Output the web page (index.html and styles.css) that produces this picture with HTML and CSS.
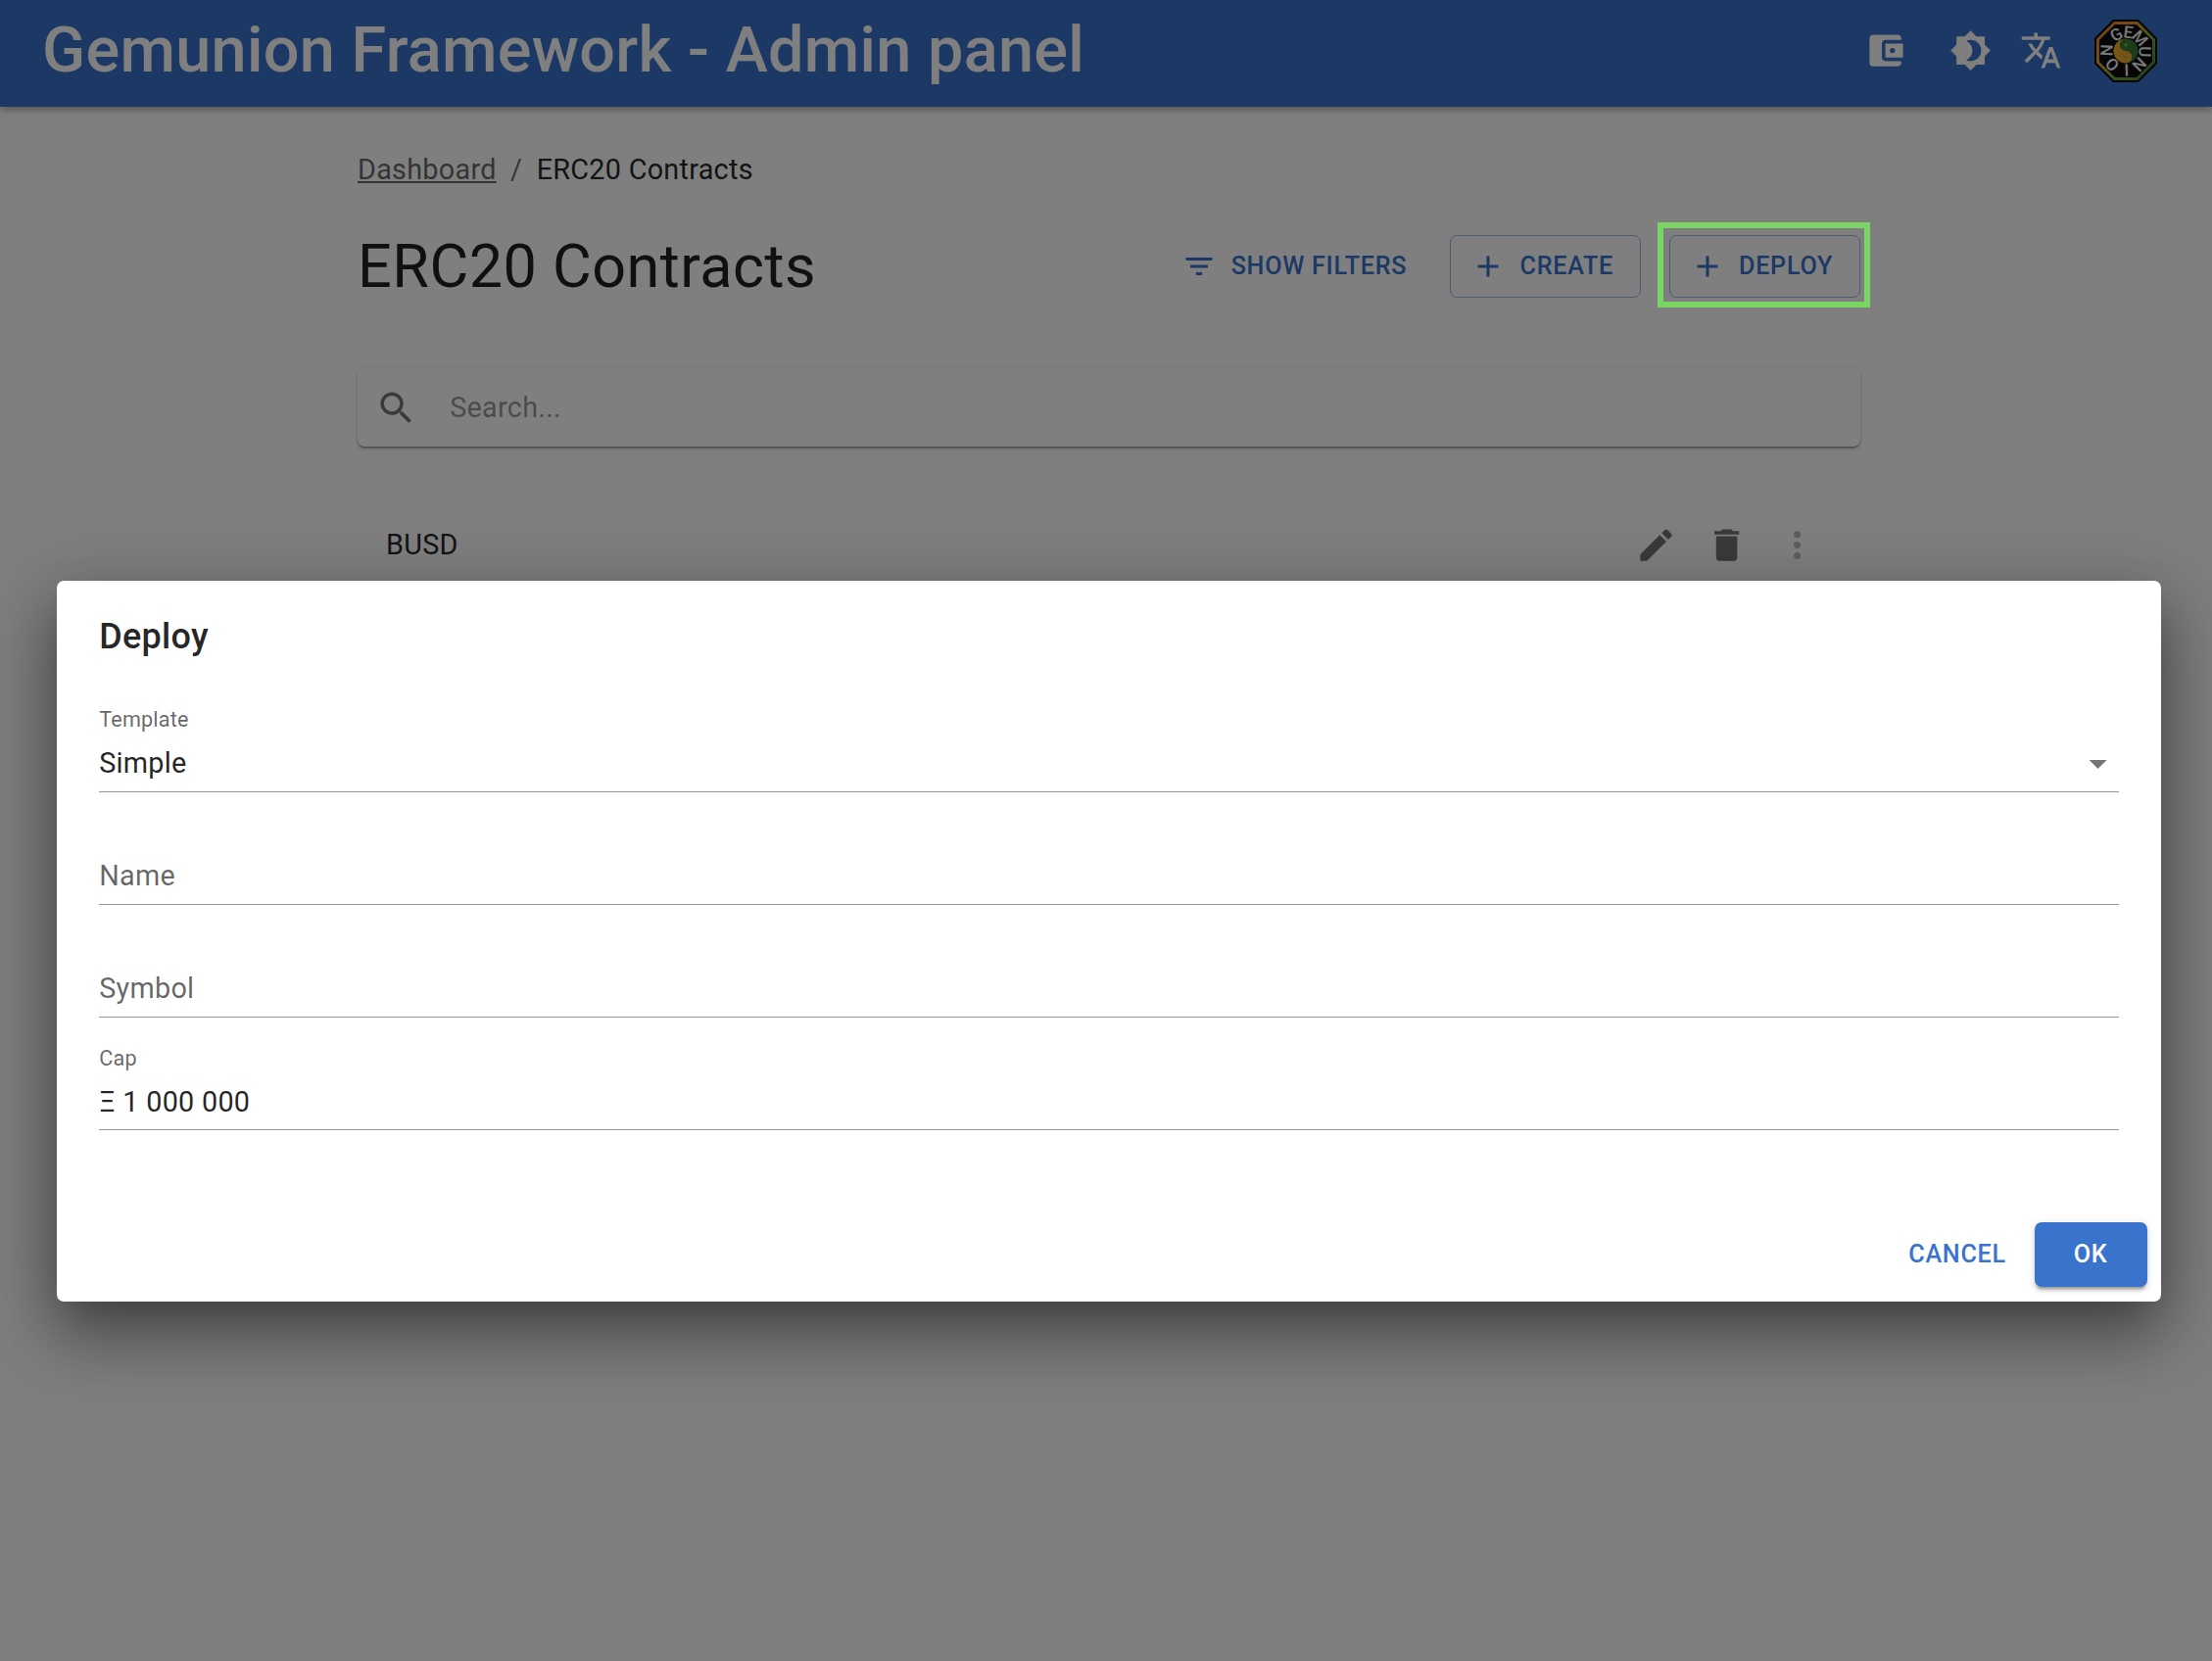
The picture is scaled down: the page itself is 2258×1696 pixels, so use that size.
FILE: index.html
```html
<!DOCTYPE html>
<html lang="en">
<head>
<meta charset="utf-8">
<title>Gemunion Framework - Admin panel</title>
<link rel="stylesheet" href="styles.css">
</head>
<body>
<header class="appbar">
  <div class="brand">Gemunion Framework - Admin panel</div>
  <div class="tools">
    <span class="tool tool-wallet"><svg class="icon" viewBox="0 0 24 24"><path d="M21 18v1c0 1.1-.9 2-2 2H5c-1.11 0-2-.9-2-2V5c0-1.1.89-2 2-2h14c1.1 0 2 .9 2 2v1h-9c-1.11 0-2 .9-2 2v8c0 1.1.89 2 2 2h9zm-9-2h10V8H12v8zm4-2.5c-.83 0-1.5-.67-1.5-1.5s.67-1.5 1.5-1.5 1.5.67 1.5 1.5-.67 1.5-1.5 1.5z"/></svg></span>
    <span class="tool tool-theme"><svg class="icon" viewBox="0 0 24 24"><path d="M20 8.69V4h-4.69L12 .69 8.69 4H4v4.69L.69 12 4 15.31V20h4.69L12 23.31 15.31 20H20v-4.69L23.31 12 20 8.69zM12 18c-.89 0-1.74-.2-2.5-.55C11.56 16.5 13 14.42 13 12s-1.44-4.5-3.5-5.45C10.26 6.2 11.11 6 12 6c3.31 0 6 2.69 6 6s-2.69 6-6 6z"/></svg></span>
    <span class="tool tool-lang"><svg class="icon" viewBox="0 0 24 24"><path d="M12.87 15.07l-2.54-2.51.03-.03c1.74-1.94 2.98-4.17 3.71-6.53H17V4h-7V2H8v2H1v1.99h11.17C11.5 7.92 10.44 9.75 9 11.35 8.07 10.32 7.3 9.19 6.69 8h-2c.73 1.63 1.73 3.17 2.98 4.56l-5.09 5.02L4 19l5-5 3.11 3.11.76-2.04zM18.5 10h-2L12 22h2l1.12-3h4.75L21 22h2l-4.5-12zm-2.62 7l1.62-4.33L19.12 17h-3.24z"/></svg></span>
    <svg class="logo" viewBox="0 0 64 64">
      <defs>
        <linearGradient id="ring" x1="0" y1="0" x2="1" y2="1">
          <stop offset="0" stop-color="#e8762a"/><stop offset=".42" stop-color="#e3a52c"/><stop offset=".58" stop-color="#7cab3a"/><stop offset="1" stop-color="#3a7a38"/>
        </linearGradient>
      </defs>
      <polygon points="19,0 45,0 64,19 64,45 45,64 19,64 0,45 0,19" fill="#0d0d0d"/>
      <polygon points="20,2 44,2 62,20 62,44 44,62 20,62 2,44 2,20" fill="url(#ring)"/>
      <polygon points="21,5 43,5 59,21 59,43 43,59 21,59 5,43 5,21" fill="#0c0c0c"/>
      <g class="logo-text">
        <text x="32" y="18.5" transform="rotate(-30 32 32)">G</text>
        <text x="32" y="18.5" transform="rotate(8 32 32)">E</text>
        <text x="32" y="18.5" transform="rotate(48 32 32)">M</text>
        <text x="32" y="18.5" transform="rotate(92 32 32)">U</text>
        <text x="32" y="18.5" transform="rotate(135 32 32)">N</text>
        <text x="32" y="18.5" transform="rotate(178 32 32)">I</text>
        <text x="32" y="18.5" transform="rotate(225 32 32)">O</text>
        <text x="32" y="18.5" transform="rotate(272 32 32)">N</text>
      </g>
      <circle cx="32" cy="32" r="12.5" fill="#3b7a33"/>
      <path d="M32 19.5a12.5 12.5 0 0 0 0 25a6.25 6.25 0 0 0 0-12.5a6.25 6.25 0 0 1 0-12.5z" fill="#eba82c"/>
      <circle cx="32" cy="25.75" r="1.5" fill="#8fb840"/><circle cx="32" cy="38.25" r="1.5" fill="#8fb840"/>
    </svg>
  </div>
</header>

<main class="page">
  <nav class="crumbs"><a class="crumb-link" href="#">Dashboard</a><span class="crumb-sep">/</span><span>ERC20 Contracts</span></nav>
  <div class="headline">
    <h1 class="page-title">ERC20 Contracts</h1>
    <div class="actions">
      <button class="btn btn-text"><svg class="btn-icon" viewBox="0 0 24 24"><path d="M10 18h4v-2h-4v2zM3 6v2h18V6H3zm3 7h12v-2H6v2z"/></svg>Show filters</button>
      <button class="btn btn-outlined"><svg class="btn-icon" viewBox="0 0 24 24"><path d="M19 13h-6v6h-2v-6H5v-2h6V5h2v6h6v2z"/></svg>Create</button>
      <span class="deploy-wrap">
        <button class="btn btn-outlined"><svg class="btn-icon" viewBox="0 0 24 24"><path d="M19 13h-6v6h-2v-6H5v-2h6V5h2v6h6v2z"/></svg>Deploy</button>
        <span class="highlight"></span>
      </span>
    </div>
  </div>
  <div class="search">
    <svg class="search-icon" viewBox="0 0 24 24"><path d="M15.5 14h-.79l-.28-.27C15.41 12.59 16 11.11 16 9.5 16 5.91 13.09 3 9.5 3S3 5.91 3 9.5 5.91 16 9.5 16c1.61 0 3.09-.59 4.23-1.57l.27.28v.79l5 4.99L20.49 19l-4.99-5zm-6 0C7.01 14 5 11.99 5 9.5S7.01 5 9.5 5 14 7.01 14 9.5 11.99 14 9.5 14z"/></svg>
    <span class="search-text">Search...</span>
  </div>
  <div class="row">
    <span class="row-name">BUSD</span>
    <span class="row-actions">
      <svg class="row-icon" viewBox="0 0 24 24"><path d="M3 17.25V21h3.75L17.81 9.94l-3.75-3.75L3 17.25zM20.71 7.04c.39-.39.39-1.02 0-1.41l-2.34-2.34c-.39-.39-1.02-.39-1.41 0l-1.83 1.83 3.75 3.75 1.83-1.83z"/></svg>
      <svg class="row-icon" viewBox="0 0 24 24"><path d="M6 19c0 1.1.9 2 2 2h8c1.1 0 2-.9 2-2V7H6v12zM19 4h-3.5l-1-1h-5l-1 1H5v2h14V4z"/></svg>
      <svg class="row-icon row-icon-muted" viewBox="0 0 24 24"><path d="M12 8c1.1 0 2-.9 2-2s-.9-2-2-2-2 .9-2 2 .9 2 2 2zm0 2c-1.1 0-2 .9-2 2s.9 2 2 2 2-.9 2-2-.9-2-2-2zm0 6c-1.1 0-2 .9-2 2s.9 2 2 2 2-.9 2-2-.9-2-2-2z"/></svg>
    </span>
  </div>
</main>

<div class="backdrop">
  <section class="dialog">
    <h2 class="dialog-title">Deploy</h2>
    <div class="dialog-body">
      <div class="field">
        <span class="field-label">Template</span>
        <span class="field-value">Simple<svg class="select-arrow" viewBox="0 0 24 24"><path d="M7 10l5 5 5-5z"/></svg></span>
      </div>
      <div class="field">
        <span class="field-label"></span>
        <span class="field-value field-empty">Name</span>
      </div>
      <div class="field">
        <span class="field-label"></span>
        <span class="field-value field-empty">Symbol</span>
      </div>
      <div class="field">
        <span class="field-label">Cap</span>
        <span class="field-value">Ξ 1 000 000</span>
      </div>
    </div>
    <div class="dialog-actions">
      <button class="btn btn-flat">Cancel</button>
      <button class="btn btn-primary">OK</button>
    </div>
  </section>
</div>
</body>
</html>
```
FILE: styles.css
```css
* { box-sizing: border-box; }
html, body { margin: 0; height: 1696px; overflow: hidden; }
body { background: #fff; color: rgba(0,0,0,.87); font-family: Roboto, "Liberation Sans", sans-serif; font-size: 28.8px; line-height: 1.5; letter-spacing: .27px; position: relative; }

.appbar { height: 109px; background: #3973cc; color: #fff; display: flex; align-items: center; justify-content: space-between; padding: 0 56px 6px 43px; box-shadow: 0 3.6px 7px rgba(0,0,0,.3); }
.brand { font-size: 64.8px; font-weight: 500; line-height: 1; letter-spacing: .3px; }
.tools { display: flex; align-items: center; }
.tool { display: flex; justify-content: center; width: 43.2px; }
.tool-theme { margin-left: 43px; }
.tool-lang { margin-left: 29px; }
.icon { width: 43.2px; height: 43.2px; fill: #fff; display: block; }
.logo { width: 64px; height: 64px; margin-left: 33px; display: block; }
.logo-text { font-family: Roboto, sans-serif; font-size: 17px; font-weight: 500; fill: #f2f2f2; text-anchor: middle; letter-spacing: 0; }

.page { margin-left: 365px; width: 1534px; padding-top: 43.2px; }
.crumbs { display: flex; line-height: 43.2px; color: rgba(0,0,0,.87); }
.crumb-link { color: rgba(0,0,0,.6); text-decoration: underline; }
.crumb-sep { margin: 0 14.4px; color: rgba(0,0,0,.6); }
.headline { display: flex; align-items: center; justify-content: space-between; margin-top: 40.5px; height: 72px; }
.page-title { margin: 0; font-size: 61.2px; font-weight: 400; line-height: 70px; letter-spacing: .45px; }
.actions { display: flex; align-items: center; gap: 28.8px; }

.btn { font: 500 25.2px/44.1px Roboto, "Liberation Sans", sans-serif; letter-spacing: .7px; text-transform: uppercase; border-radius: 7.2px; background: none; border: 0; cursor: pointer; display: flex; align-items: center; }
.btn-icon { width: 36px; height: 36px; fill: currentColor; margin: 0 14.4px 0 -7.2px; }
.btn-text { color: #3973cc; padding: 10.8px 15.4px 10.8px 21px; }
.btn-outlined { color: #3973cc; padding: 9px 27px; border: 1.8px solid rgba(57,115,204,.5); }
.deploy-wrap { position: relative; display: block; }
.highlight { position: absolute; left: -12px; right: -10px; top: -13px; bottom: -10px; border: 6px solid #7ad565; z-index: 20; }

.search { height: 80px; margin-top: 68.5px; border-radius: 7.2px; box-shadow: 0 2px 2px -1px rgba(0,0,0,.3), 0 1.8px 1.8px rgba(0,0,0,.14), 0 1.8px 5.4px rgba(0,0,0,.12); display: flex; align-items: center; padding-left: 18px; }
.search-icon { width: 43.2px; height: 43.2px; fill: rgba(0,0,0,.54); flex: none; }
.search-text { margin-left: 33px; color: rgba(0,0,0,.42); }
.row { display: flex; align-items: center; justify-content: space-between; height: 78px; margin-top: 61px; padding: 0 43px 0 29px; }
.row-actions { display: flex; gap: 28.8px; }
.row-icon { width: 43.2px; height: 43.2px; fill: rgba(0,0,0,.54); }
.row-icon-muted { fill: rgba(0,0,0,.26); }

.backdrop { position: absolute; inset: 0; z-index: 10; background: rgba(0,0,0,.5); padding: 593px 52px 0 58px; }
.dialog { height: 736px; background: #fff; border-radius: 7.2px; box-shadow: 0 20px 46px -12px rgba(0,0,0,.35), 0 43px 68px 5px rgba(0,0,0,.2), 0 16px 82px 14px rgba(0,0,0,.15); display: flex; flex-direction: column; }
.dialog-title { margin: 0; padding: 28.8px 43.2px 0; font-size: 36px; font-weight: 500; line-height: 57.6px; }
.dialog-body { margin-top: 43px; padding: 0 43.2px; flex: 1; }
.field { height: 86.4px; margin-bottom: 28.8px; border-bottom: 1.8px solid rgba(0,0,0,.42); display: flex; flex-direction: column; }
.field-label { height: 26px; font-size: 21.6px; line-height: 26px; letter-spacing: .2px; color: rgba(0,0,0,.6); flex: none; }
.field-value { display: flex; align-items: center; justify-content: space-between; height: 56px; line-height: 56px; margin-top: 3px; flex: none; }
.field-empty { color: rgba(0,0,0,.6); margin-top: 2px; }
.select-arrow { width: 43.2px; height: 43.2px; fill: rgba(0,0,0,.54); }
.dialog-actions { display: flex; justify-content: flex-end; align-items: center; gap: 14.4px; padding: 14.4px 14.4px 15px; }
.btn-flat { color: #3973cc; padding: 10.8px 14.4px; }
.btn-primary { color: #fff; background: #3973cc; width: 115px; height: 66px; justify-content: center; box-shadow: 0 5.4px 2px -3.6px rgba(0,0,0,.2), 0 3.6px 3.6px rgba(0,0,0,.14), 0 1.8px 9px rgba(0,0,0,.12); }
```
